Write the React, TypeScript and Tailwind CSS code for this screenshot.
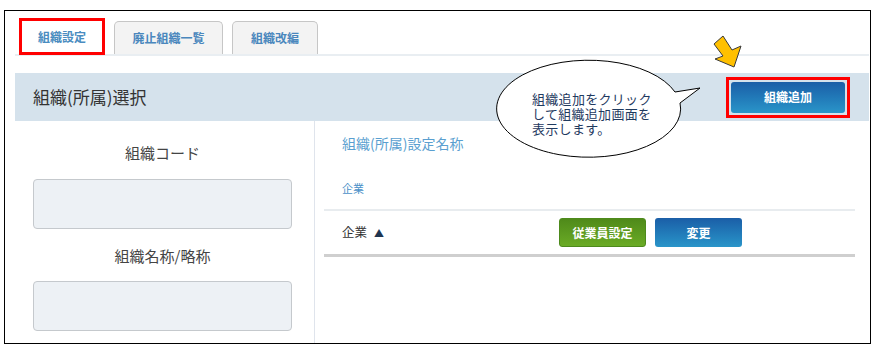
import React from "react";

const font = { fontFamily: '"Noto Sans CJK JP", "Noto Sans", sans-serif' };

export default function App() {
  return (
    <div className="w-[880px] h-[356px] bg-white relative overflow-hidden" style={font}>
      <div className="absolute left-[4px] top-[10px] w-[867px] h-[334px] border border-black" />
      <div className="pt-[19px] pl-[15px] pr-[11px]">
        {/* tabs */}
        <div className="relative h-[36px]">
          <div className="flex items-end h-[35px] pl-[4px] gap-[9px]">
            <div className="w-[86px] h-[37px] -mb-[1px] border-[3px] border-[#ff0000] bg-white flex items-center justify-center text-[12px] font-bold text-[#4a8cc0] relative z-10">
              組織設定
            </div>
            <div className="w-[109px] h-[33px] border border-[#c6c6c6] border-b-0 rounded-t-[5px] bg-[#f3f3f3] flex items-center justify-center text-[12px] font-bold text-[#4a87bd]">
              廃止組織一覧
            </div>
            <div className="w-[86px] h-[33px] border border-[#c6c6c6] border-b-0 rounded-t-[5px] bg-[#f3f3f3] flex items-center justify-center text-[12px] font-bold text-[#4a87bd]">
              組織改編
            </div>
          </div>
          <div className="h-[2px] bg-[#e9eef2]" />
        </div>
        {/* header bar */}
        <div className="mt-[18px] h-[48px] bg-[#d5e2ec] flex items-center justify-between pl-[18px] pr-[19px]">
          <div className="text-[17px] text-[#333333]">組織(所属)選択</div>
          <div className="border-[3px] border-[#ff0000] p-[2px]">
            <div className="w-[114px] h-[31px] rounded-[3px] bg-gradient-to-b from-[#1b5ea7] to-[#2a95c9] flex items-center justify-center text-white text-[12px] font-bold">
              組織追加
            </div>
          </div>
        </div>
        {/* body */}
        <div className="flex h-[222px]">
          <div className="w-[300px] border-r border-[#dfe4ec] flex flex-col items-start pt-[21px] pl-[18px]">
            <div className="w-[259px] text-center text-[15px] leading-[22px] text-[#444444]">組織コード</div>
            <div className="mt-[15px] w-[259px] h-[50px] rounded-[4px] border border-[#c5c9cd] bg-[#edf1f5]" />
            <div className="mt-[16px] w-[259px] text-center text-[15px] leading-[22px] text-[#444444]">組織名称/略称</div>
            <div className="mt-[14px] w-[259px] h-[50px] rounded-[4px] border border-[#c5c9cd] bg-[#edf1f5]" />
          </div>
          <div className="flex-1 pl-[9px] pr-[14px]">
            <div className="pt-[12px] pl-[18px] text-[14px] leading-[20px] text-[#5a9fd0]">組織(所属)設定名称</div>
            <div className="mt-[27px] pl-[18px] text-[11px] leading-[16px] text-[#4a90c8]">企業</div>
            <div className="mt-[13px] h-[2px] bg-[#e8ecef]" />
            <div className="h-[43px] flex items-center pl-[18px]">
              <div className="w-[217px] flex items-center text-[12.5px] text-[#333333]">
                企業<span className="ml-[7px] text-[10px] text-[#1f3550]">▲</span>
              </div>
              <div className="w-[87px] h-[29px] rounded-[3px] bg-gradient-to-b from-[#4f8a1a] to-[#6aab25] border border-[#4d8a1c] flex items-center justify-center text-white text-[12px] font-bold">
                従業員設定
              </div>
              <div className="ml-[9px] w-[87px] h-[29px] rounded-[3px] bg-gradient-to-b from-[#1b5ea7] to-[#2a95c9] flex items-center justify-center text-white text-[12px] font-bold">
                変更
              </div>
            </div>
            <div className="h-[3px] bg-[#cfcfcf]" />
          </div>
        </div>
      </div>

      {/* speech bubble */}
      <svg className="absolute left-0 top-0" width="880" height="356" viewBox="0 0 880 356">
        <path
          d="M 675 92 L 700 88 L 680 103 A 92 48.5 0 1 1 675 92 Z"
          fill="#ffffff"
          stroke="#000000"
          strokeWidth="1"
        />
        <polygon
          points="723,36 732,50 741,46 734,67 715,59 723,56 714,44"
          fill="#ffc000"
          stroke="#3a3a3a"
          strokeWidth="1"
          strokeLinejoin="miter"
        />
      </svg>
      <div className="absolute left-[532px] top-[91px] flex flex-col text-[13px] text-[#1f3a5f] tracking-[0.3px]">
        <div className="h-[15px] leading-[15px]">組織追加をクリック</div>
        <div className="h-[15px] leading-[15px]">して組織追加画面を</div>
        <div className="h-[15px] leading-[15px]">表示します。</div>
      </div>
    </div>
  );
}
